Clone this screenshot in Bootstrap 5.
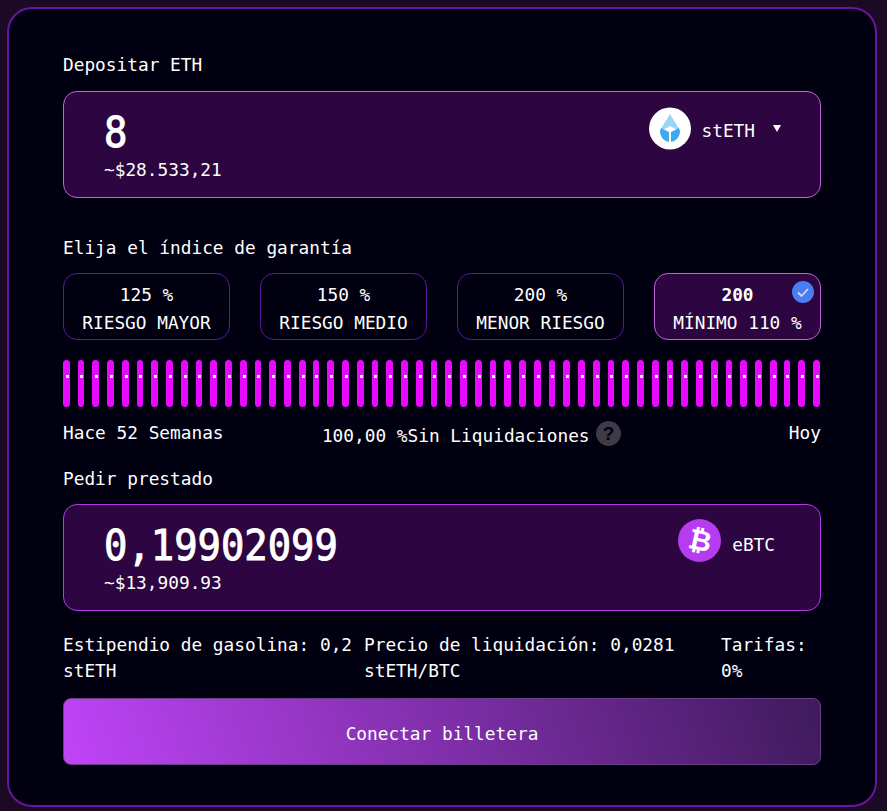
<!DOCTYPE html>
<html lang="es"><head><meta charset="utf-8"><title>Depositar</title>
<link href="https://cdn.jsdelivr.net/npm/bootstrap@5.3.0/dist/css/bootstrap.min.css" rel="stylesheet">
<style>
html,body{height:100%}
body{background:#1c0a24;font-family:"DejaVu Sans Mono",monospace;color:#fff;font-size:17.8px;line-height:24px;margin:0;padding:7px 10px 4px 7px;overflow:hidden}
.panel{height:800px;border:2px solid #6a14a3;border-radius:25px;background:#000010;padding:44px 54px 0 54px}
.lbl{height:24px;margin-bottom:14px}
.inbox{background:#2d0540;border:1px solid #c45fd8;border-radius:14px;padding:0 39px 0 40px;display:flex;justify-content:space-between}
.dep{height:107px}
.bor{height:107px;border-color:#b13ce8}
.amtwrap{padding-top:16px}
.amt{font-weight:400;font-size:42px;line-height:50px;-webkit-text-stroke:1px #fff;transform:scaleX(.925);transform-origin:left center}
.sub{line-height:24px}
.opt{width:167px;height:67px;border:1px solid #5b189a;border-radius:14px;text-align:center;line-height:28px;padding-top:7px;position:relative;background:#000010}
.opt.on{background:#2d0540;border-color:#c45fd8}
.chk{position:absolute;top:7px;right:6px}
.bars{height:47px;margin-top:20px}
.bar{width:7px;height:47px;background:#e60aff;border-radius:4px;position:relative}
.bar.n{width:6px}
.bar::after{content:"";position:absolute;left:3px;top:15px;width:3px;height:3px;background:#fff}
.bar.n::after{left:2px}
.infor{height:24px;margin-top:14px}
.mid{padding-top:3px;margin-right:70px}
.btnw{height:67px;width:100%;border:1px solid #6b3f86;border-radius:8px;background:linear-gradient(70deg,#c044f8 0%,#3f1a5c 100%);color:#fff;padding-top:6px}
.gas{line-height:26px}
.tokd{padding-top:15px}
.tokb{padding:14px 6px 0 0}
</style></head><body>
<div class="panel">
<div class="lbl">Depositar ETH</div>
<div class="inbox dep">
 <div class="amtwrap"><div class="amt">8</div><div class="sub">~$28.533,21</div></div>
 <div class="d-flex align-items-start tokd">
  <svg width="42" height="43" viewBox="0 0 42 43" class="me-2"><circle cx="21" cy="21.500" r="21" fill="#fff"/><path d="M21 7l-8 13c-1 2-1 3-1 4l9-5 9 5c0-1 0-2-1-4z" fill="#9bd5f6"/><path d="M11 24c0 6 4 10 9 11V25l-8-4zM31 24c0 6-4 10-9 11V25l8-4z" fill="#3fa9f0"/></svg>
  <span style="margin:12px 0 0 2px">stETH</span>
  <svg width="8" height="7" viewBox="0 0 8 7" style="margin:18px 0 0 18px"><path d="M0 0h8L4 7z" fill="#fff"/></svg>
 </div>
</div>
<div class="lbl" style="margin-top:38px;margin-bottom:13px">Elija el índice de garantía</div>
<div class="d-flex justify-content-between">
 <div class="opt">125 %<br>RIESGO MAYOR</div>
 <div class="opt">150 %<br>RIESGO MEDIO</div>
 <div class="opt">200 %<br>MENOR RIESGO</div>
 <div class="opt on"><b>200</b><br>MÍNIMO 110 %
  <svg class="chk" width="22" height="22" viewBox="0 0 22 22"><circle cx="11" cy="11" r="11" fill="#4a7df0"/><path d="M6 11.500l3.500 3.500L16 8" fill="none" stroke="#cfd9f5" stroke-width="1.800"/></svg>
 </div>
</div>
<div class="bars d-flex justify-content-between" id="bars"></div>
<div class="d-flex justify-content-between align-items-start infor">
 <span>Hace 52 Semanas</span>
 <span class="d-flex align-items-start mid">100,00 %Sin Liquidaciones
  <svg width="25" height="25" viewBox="0 0 25 25" style="margin:-3px 0 0 6px"><circle cx="12.500" cy="12.500" r="12.500" fill="#3f3a45"/><text x="12.500" y="19" text-anchor="middle" font-family="Liberation Sans" font-weight="700" font-size="19" fill="#000010">?</text></svg></span>
 <span>Hoy</span>
</div>
<div class="lbl" style="margin-top:22px;margin-bottom:13px">Pedir prestado</div>
<div class="inbox bor">
 <div class="amtwrap"><div class="amt">0,19902099</div><div class="sub">~$13,909.93</div></div>
 <div class="d-flex align-items-start tokb">
  <svg width="43" height="43" viewBox="0 0 43 43" class="me-2"><circle cx="21.500" cy="21.500" r="21.500" fill="#b53cf0"/><text x="22" y="31" text-anchor="middle" font-family="Liberation Sans" font-weight="700" font-size="28" fill="#fff" transform="rotate(12 22 22)">₿</text></svg>
  <span style="margin:14px 0 0 3px">eBTC</span>
 </div>
</div>
<div class="row g-0 gas" style="margin-top:21px">
 <div style="width:301px">Estipendio de gasolina: 0,2 stETH</div>
 <div style="width:357px">Precio de liquidación: 0,0281 stETH/BTC</div>
 <div style="width:100px">Tarifas: 0%</div>
</div>
<button class="btnw d-block" style="margin-top:14px">Conectar billetera</button>
</div>
<script>
var b=document.getElementById('bars'),h='';
for(var i=0;i<52;i++){h+='<div class="bar'+(i%4==1?' n':'')+'"></div>';}
b.innerHTML=h;
</script>
<script src="https://cdn.jsdelivr.net/npm/bootstrap@5.3.0/dist/js/bootstrap.bundle.min.js"></script>
</body></html>
